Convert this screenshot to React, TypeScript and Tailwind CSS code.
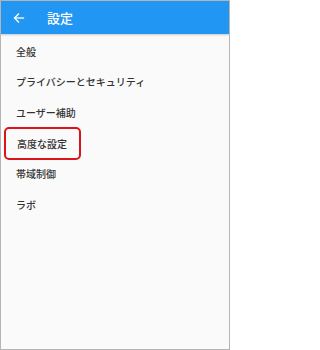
import React from "react";

const items = ["全般", "プライバシーとセキュリティ", "ユーザー補助", "高度な設定", "帯域制御", "ラボ"];

export default function App() {
  return (
    <div
      className="w-[230px] h-[350px] border border-[#b5b5b5] bg-[#fafafa] flex flex-col overflow-hidden"
      style={{ fontFamily: '"Noto Sans CJK JP", "Noto Sans", sans-serif' }}
    >
      <div className="h-[33px] shrink-0 bg-[#2196f3] flex items-center shadow-[0_1px_2px_rgba(0,0,0,0.2)]">
        <svg className="ml-[12px] w-[12px] h-[12px]" viewBox="0 0 24 24" fill="none" stroke="white" strokeWidth="2.6" strokeLinecap="square">
          <path d="M21 12H4" />
          <path d="M11 4l-8 8 8 8" />
        </svg>
        <span className="ml-[22px] text-white text-[13px] font-medium leading-none">設定</span>
      </div>
      <div className="flex flex-col pt-[2px]">
        {items.map((t, i) => (
          <div key={t} className="h-[30.6px] flex items-center pl-[15px]">
            {i === 3 ? (
              <div className="-ml-[12px] w-[77px] h-[33px] border-2 border-[#d9141b] rounded-[5px] flex items-center pl-[11px]">
                <span className="text-[10px] font-medium text-[#333]">{t}</span>
              </div>
            ) : (
              <span className="text-[10px] font-medium text-[#333]">{t}</span>
            )}
          </div>
        ))}
      </div>
    </div>
  );
}
